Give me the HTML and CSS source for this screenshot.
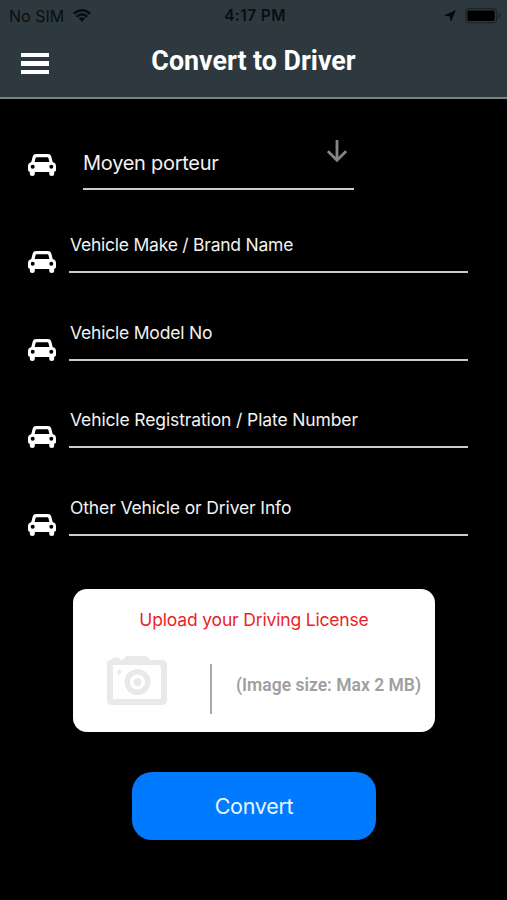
FILE: index.html
```html
<!DOCTYPE html>
<html lang="en">
<head>
    <meta charset="UTF-8">
    <meta name="viewport" content="width=device-width, initial-scale=1.0">
    <title>Convert to Driver</title>
    <link rel="stylesheet" href="styles.css">
</head>
<body>
    <svg class="sprite">
        <symbol id="car" viewBox="0 0 28 22">
            <path fill="#fff" fill-rule="evenodd" d="M8 0H20Q22.5 0 23.3 2.4L24.7 8Q28 9 28 12V16Q28 17.6 26.2 17.8V19.5A2.5 2.5 0 0 1 21.2 19.5V18H6.8V19.5A2.5 2.5 0 0 1 1.8 19.5V17.8Q0 17.6 0 16V12Q0 9 3.3 8L4.7 2.4Q5.5 0 8 0ZM8.3 3.2Q7.8 3.2 7.6 4L6.6 8H21.4L20.4 4Q20.2 3.2 19.7 3.2ZM4.7 10.8A2 2 0 1 0 4.7 14.8A2 2 0 1 0 4.7 10.8ZM23.3 10.8A2 2 0 1 0 23.3 14.8A2 2 0 1 0 23.3 10.8Z"/>
        </symbol>
    </svg>

    <header class="header">
        <div class="status-bar">
            <div class="carrier">
                <span>No SIM</span>
                <svg class="wifi" viewBox="0 0 18 13">
                    <path fill="none" stroke="#0a0e10" stroke-width="2.6" d="M0.8 4.7Q9-2.3 17.200 4.700M3.700 7.700Q9 3.200 14.300 7.700"/>
                    <path fill="#0a0e10" d="M5.900 9.600Q9 7 12.100 9.600L9 12.900Z"/>
                </svg>
            </div>
            <div class="time">4:17 PM</div>
            <div class="indicators">
                <svg class="location" viewBox="0 0 12 12"><path fill="#050708" d="M12 0L6.800 12L5.700 6.500L0 5.600Z"/></svg>
                <svg class="battery" viewBox="0 0 36 16">
                    <rect x="0.700" y="0.700" width="31" height="14" rx="3.500" fill="none" stroke="#1c2427" stroke-width="1.200"/>
                    <rect x="2.300" y="2.400" width="27.500" height="10.600" rx="2" fill="#000"/>
                    <path fill="#1c2427" d="M33.500 5Q35.500 6 35.500 7.700T33.500 10.400Z"/>
                </svg>
            </div>
        </div>
        <div class="nav">
            <div class="menu"><span></span><span></span><span></span></div>
            <h1>Convert to Driver</h1>
        </div>
    </header>

    <main>
        <div class="type-row">
            <svg class="car"><use href="#car"/></svg>
            <div class="select">
                <span>Moyen porteur</span>
                <svg class="arrow" viewBox="0 0 20 22"><path fill="none" stroke="#858585" stroke-width="2.800" d="M10 0V20M0.900 11.200L10 20.300L19.100 11.200"/></svg>
            </div>
        </div>

        <div class="field">
            <svg class="car"><use href="#car"/></svg>
            <div class="input"><span class="make">Vehicle Make / Brand Name</span></div>
        </div>
        <div class="field">
            <svg class="car"><use href="#car"/></svg>
            <div class="input"><span class="model">Vehicle Model No</span></div>
        </div>
        <div class="field">
            <svg class="car"><use href="#car"/></svg>
            <div class="input"><span class="plate">Vehicle Registration / Plate Number</span></div>
        </div>
        <div class="field">
            <svg class="car"><use href="#car"/></svg>
            <div class="input"><span class="info">Other Vehicle or Driver Info</span></div>
        </div>

        <div class="upload">
            <div class="upload-title">Upload your Driving License</div>
            <div class="upload-body">
                <svg class="camera" viewBox="0 0 60 49">
                    <path fill="#e9e9e9" fill-rule="evenodd" d="M4 4Q5 1.500 7.500 1.500H10Q12.500 1.500 13.500 4H16Q18 0 21 0H38Q41 0 43 4H55Q60 4.500 60 9V44Q60 49 55 49H5Q0 49 0 44V8Q0 4 4 4ZM6 9V43H54V13Q54 9 50 9Z"/>
                    <circle cx="30.500" cy="26" r="10.300" fill="none" stroke="#e9e9e9" stroke-width="5.500"/>
                    <circle cx="30.500" cy="26" r="4" fill="#e9e9e9"/>
                    <path fill="#e9e9e9" d="M12.300 12.500L13.400 14.900L15.800 16L13.400 17.100L12.300 19.500L11.200 17.100L8.800 16L11.200 14.900Z"/>
                </svg>
                <div class="divider"></div>
                <div class="hint">(Image size: Max 2 MB)</div>
            </div>
        </div>

        <button class="convert">Convert</button>
    </main>
</body>
</html>
```
FILE: styles.css
```css
* {
    box-sizing: border-box;
}
body {
    margin: 0;
    min-height: 900px;
    background: #000;
    color: #f2f2f2;
    font-family: Inter, sans-serif;
}
svg {
    display: block;
    flex-shrink: 0;
}
.sprite {
    display: none;
}
.header {
    height: 99px;
    background: #2d393e;
    border-bottom: 2px solid #778481;
}
.status-bar {
    display: grid;
    grid-template-columns: 1fr auto 1fr;
    align-items: center;
    height: 30px;
    padding: 0 6px 0 9px;
    color: #0a0e10;
    font-size: 16px;
    line-height: 30px;
}
.carrier {
    display: flex;
    align-items: center;
    gap: 9px;
}
.wifi {
    width: 18px;
    height: 13px;
}
.time {
    padding-top: 1px;
    font-weight: 600;
    font-size: 15.5px;
    letter-spacing: 0.4px;
}
.indicators {
    display: flex;
    align-items: center;
    justify-content: flex-end;
    gap: 9px;
}
.location {
    width: 12px;
    height: 12px;
}
.battery {
    width: 36px;
    height: 16px;
}
.nav {
    display: grid;
    grid-template-columns: 28px 1fr 28px;
    align-items: center;
    height: 66px;
    padding: 0 21px;
}
.menu {
    display: grid;
    gap: 4px;
    padding-top: 1px;
}
.menu span {
    height: 4.5px;
    background: #fff;
}
h1 {
    margin: 0;
    padding-bottom: 5px;
    color: #fff;
    font-family: Roboto, sans-serif;
    font-size: 26.8px;
    font-weight: 700;
    line-height: 30px;
    text-align: center;
}
.car {
    width: 28px;
    height: 22px;
}
.type-row {
    display: flex;
    align-items: flex-end;
    height: 91px;
    padding-left: 28px;
}
.type-row .car {
    margin-bottom: 14px;
}
.select {
    display: flex;
    justify-content: space-between;
    width: 271px;
    height: 52px;
    margin-left: 27px;
    padding-right: 7px;
    border-bottom: 2px solid #ccc;
    font-size: 20px;
    letter-spacing: -0.27px;
    line-height: 50px;
}
.arrow {
    width: 20px;
    height: 22px;
    margin-top: 2px;
}
.field {
    display: flex;
    align-items: flex-end;
    height: 50px;
    margin: 33px 39px 37.7px 28px;
}
.field + .field {
    margin-top: 0;
}
.input {
    flex: 1;
    height: 50px;
    margin-left: 13px;
    padding: 11px 0 0 1px;
    border-bottom: 2px solid #ccc;
    font-size: 17.5px;
    line-height: 22px;
}
.make {
    letter-spacing: -0.23px;
}
.model {
    letter-spacing: -0.2px;
}
.plate {
    letter-spacing: -0.12px;
}
.info {
    letter-spacing: -0.13px;
}
.upload {
    width: 362px;
    height: 143px;
    margin: 52.6px 0 0 73px;
    padding-top: 20px;
    border-radius: 14px;
    background: #fff;
}
.upload-title {
    color: #ee2226;
    font-size: 17.5px;
    letter-spacing: -0.17px;
    line-height: 22px;
    text-align: center;
}
.upload-body {
    display: flex;
    align-items: flex-start;
    padding: 25px 0 0 34px;
}
.camera {
    width: 60px;
    height: 49px;
}
.divider {
    width: 2px;
    height: 50px;
    margin: 8px 24px 0 43px;
    background: #aaa;
}
.hint {
    margin-top: 18px;
    color: #a0a0a0;
    font-family: Roboto, sans-serif;
    font-size: 17.5px;
    font-weight: 600;
    line-height: 22px;
    white-space: nowrap;
}
.convert {
    display: block;
    width: 244px;
    height: 68px;
    margin: 40px 0 0 132px;
    border: none;
    border-radius: 20px;
    background: #007aff;
    color: #e8f6ff;
    font-family: Inter, sans-serif;
    font-size: 21.5px;
    letter-spacing: -0.3px;
}
```
